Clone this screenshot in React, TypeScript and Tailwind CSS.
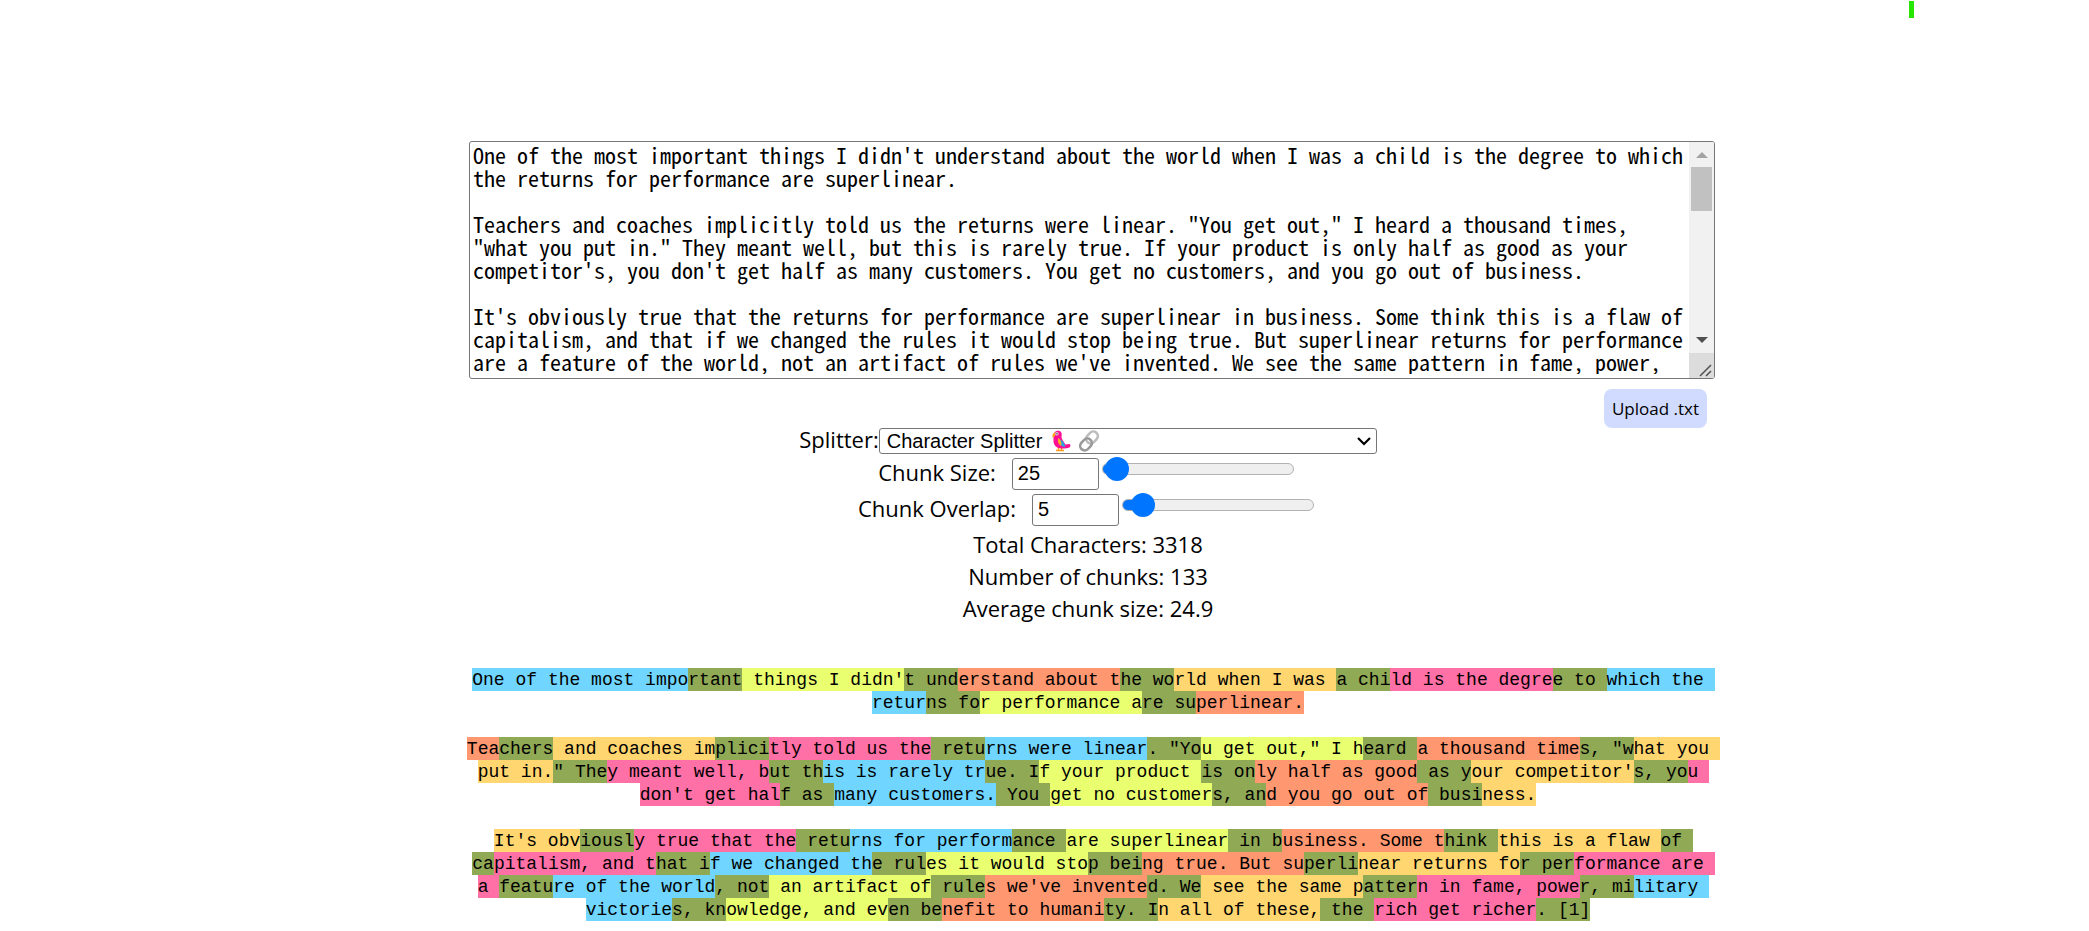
import { useState } from "react";

const ESSAY = `One of the most important things I didn't understand about the world when I was a child is the degree to which the returns for performance are superlinear.

Teachers and coaches implicitly told us the returns were linear. "You get out," I heard a thousand times, "what you put in." They meant well, but this is rarely true. If your product is only half as good as your competitor's, you don't get half as many customers. You get no customers, and you go out of business.

It's obviously true that the returns for performance are superlinear in business. Some think this is a flaw of capitalism, and that if we changed the rules it would stop being true. But superlinear returns for performance are a feature of the world, not an artifact of rules we've invented. We see the same pattern in fame, power, military victories, knowledge, and even benefit to humanity. In all of these, the rich get richer. [1]`;

const COLORS = ["bg-[#70d6ff]", "bg-[#e9ff70]", "bg-[#ff9770]", "bg-[#ffd670]", "bg-[#ff70a6]"];
const OVERLAP_COLOR = "bg-[#90a955]";

type Piece = { text: string; color: string };

// Splits text into alternating runs: the part unique to a chunk, then the part shared with the next one.
function highlight(text: string, size: number, overlap: number): Piece[] {
  const step = Math.max(1, size - overlap);
  const pieces: Piece[] = [];
  for (let start = 0, i = 0; start < text.length; start += step, i++) {
    const from = i === 0 ? 0 : start + overlap;
    const own = text.slice(from, start + step);
    const shared = text.slice(start + step, start + size);
    if (own) pieces.push({ text: own, color: COLORS[i % COLORS.length] });
    if (shared) pieces.push({ text: shared, color: OVERLAP_COLOR });
  }
  return pieces;
}

function Slider({ label, value, min, max, onChange }: {
  label: string; value: number; min: number; max: number; onChange: (n: number) => void;
}) {
  const fraction = (value - min) / (max - min);
  const fill = Math.round(12 + fraction * 168);
  return (
    <input
      type="range"
      aria-label={label}
      min={min}
      max={max}
      value={value}
      onChange={(e) => onChange(Number(e.target.value))}
      style={{ ["--fill" as string]: `${fill}px` }}
      className="mt-px ml-[3px] h-6 w-48 appearance-none self-start bg-transparent [&::-webkit-slider-runnable-track]:h-3 [&::-webkit-slider-runnable-track]:rounded-full [&::-webkit-slider-runnable-track]:border [&::-webkit-slider-runnable-track]:border-[#b2b2b2] [&::-webkit-slider-runnable-track]:bg-[linear-gradient(to_right,#0075ff_var(--fill),#efefef_var(--fill))] [&::-webkit-slider-thumb]:-mt-[7px] [&::-webkit-slider-thumb]:size-6 [&::-webkit-slider-thumb]:appearance-none [&::-webkit-slider-thumb]:rounded-full [&::-webkit-slider-thumb]:bg-[#0075ff]"
    />
  );
}

function NumberRow({ id, label, value, min, max, onChange }: {
  id: string; label: string; value: number; min: number; max: number; onChange: (n: number) => void;
}) {
  return (
    <div className="flex h-9 items-center justify-center pr-1">
      <label htmlFor={id} className="mr-4 pb-1">{label}</label>
      <input
        id={id}
        type="number"
        value={value}
        onChange={(e) => onChange(Number(e.target.value))}
        className="h-8 w-[87px] rounded-[3px] border border-[#767676] bg-white px-[5px] pb-0.5 font-['Liberation_Sans',sans-serif] text-xl [&::-webkit-inner-spin-button]:appearance-none"
      />
      <Slider label={`${label} slider`} value={value} min={min} max={max} onChange={onChange} />
    </div>
  );
}

function Parrot() {
  return (
    <svg viewBox="0 0 20 24" className="h-6 w-5" aria-hidden="true">
      <path d="M6.500 17v4.500M9.500 17v4.500M4 21.500h8" stroke="#ff9b1a" strokeWidth="1.500" fill="none" />
      <path d="M1.500 7C1.500 3.500 3.800 1.800 6 1.800c3 0 4.200 2.200 3.600 5.200-.3 2 .6 3.500 1.600 5l2.300 3.500 4-.5c1.200-.1 1.300 3-.2 3.500-1.600.6-4.300 1-7.300 1C4.500 19.500 1.500 16 1.500 12Z" fill="#ff0f93" />
      <path d="M7 10c3 .8 6 4 6.200 8-3.700 0-6.200-3.500-6.200-8Z" fill="#28a5de" />
      <path d="M6.500 9c2 1.500 3.500 4.500 2.500 8C6.500 15.500 5 12.500 6.500 9Z" fill="#ffae20" />
      <path d="M3.500 3.500C1 3.500 0 6 .6 8.500 2.500 8 4 6.500 3.500 3.500Z" fill="#ffa51e" />
      <circle cx="5" cy="4.800" r="1.700" fill="#ded2e2" />
      <circle cx="5" cy="4.800" r=".7" fill="#44324d" />
    </svg>
  );
}

function Chain() {
  return (
    <svg viewBox="0 0 22 24" className="h-6 w-[22px]" fill="none" strokeWidth="2.600" aria-hidden="true">
      <rect x="7.500" y="4" width="13" height="9" rx="4.500" transform="rotate(-48 14 8.500)" stroke="#bcbcbc" />
      <rect x="1.500" y="11" width="13" height="9" rx="4.500" transform="rotate(-48 8 15.500)" stroke="#999" />
    </svg>
  );
}

export default function App() {
  const [text, setText] = useState(ESSAY);
  const [size, setSize] = useState(25);
  const [overlap, setOverlap] = useState(5);

  return (
    <div className="min-h-screen bg-white font-['Open_Sans','Noto_Sans',sans-serif] text-[22px] text-black">
      <header className="flex h-[141px] justify-end pt-px pr-[175px]">
        <div className="h-[17px] w-[5px] bg-[#26e600]" />
      </header>
      <main className="grid grid-cols-[466fr_1249fr_374fr]">
        <div className="col-start-2">
          <div className="ml-[3px] flex h-[238px] overflow-hidden rounded-[3px] border border-[#767676]">
            <textarea
              aria-label="Text to split"
              value={text}
              onChange={(e) => setText(e.target.value)}
              className="mb-1 min-w-0 flex-1 resize-none overflow-y-scroll pt-px pl-[3px] font-['Noto_Sans_Mono_CJK_SC','Liberation_Mono',monospace] text-[22px] leading-[23px] outline-none [scrollbar-width:none]"
            />
            <div className="flex w-[25px] flex-col items-center bg-[#f1f1f1]" aria-hidden="true">
              <svg viewBox="0 0 12 6" className="mt-2.5 mb-[9px] h-[6px] w-3"><path d="M6 0l6 6H0z" fill="#a3a3a3" /></svg>
              <div className="h-11 w-[21px] bg-[#c1c1c1]" />
              <svg viewBox="0 0 12 6" className="mt-auto mb-2.5 h-[6px] w-3"><path d="M0 0h12L6 6z" fill="#505050" /></svg>
              <svg viewBox="0 0 25 25" className="h-[25px] w-full bg-[#dcdcdc]" fill="none" stroke="#505050" strokeWidth="1.500">
                <path d="M11 23L22 12M17 23l5-5" />
              </svg>
            </div>
          </div>
          <div className="flex justify-end pt-2.5 pr-2">
            <button type="button" className="h-[39px] rounded-lg bg-[#d1dbff] px-2 text-[17px]">Upload .txt</button>
          </div>

          <div className="pr-[5px]">
            <div className="flex h-7 items-start justify-center">
              <label htmlFor="splitter" className="leading-[22px]">Splitter:</label>
              <div className="relative">
                <select
                  id="splitter"
                  className="block h-[26px] w-[498px] appearance-none rounded-[3px] border border-[#767676] bg-white pl-[7px] font-['Liberation_Sans',sans-serif] text-xl leading-6"
                >
                  <option>Character Splitter</option>
                </select>
                <span className="pointer-events-none absolute top-px left-[173px] flex gap-1.5">
                  <Parrot />
                  <Chain />
                </span>
                <svg viewBox="0 0 14 9" className="pointer-events-none absolute top-[9px] right-1.5 h-[9px] w-[14px]" fill="none" stroke="#000" strokeWidth="2.200" aria-hidden="true">
                  <path d="M1 1l6 6 6-6" />
                </svg>
              </div>
            </div>
            <NumberRow id="chunk-size" label="Chunk Size:" value={size} min={1} max={2000} onChange={setSize} />
            <NumberRow id="chunk-overlap" label="Chunk Overlap:" value={overlap} min={0} max={100} onChange={setOverlap} />
            <div className="text-center leading-8">
              <p>Total Characters: 3318</p>
              <p>Number of chunks: 133</p>
              <p>Average chunk size: 24.9</p>
            </div>
            <div className="mt-[45px] text-center font-['Liberation_Mono',monospace] text-lg leading-[23px] whitespace-pre-wrap">
              {highlight(text, size, overlap).map((piece, i) => (
                <span key={i} className={`${piece.color} pt-0.5 pb-px`}>{piece.text}</span>
              ))}
            </div>
          </div>
        </div>
      </main>
    </div>
  );
}
